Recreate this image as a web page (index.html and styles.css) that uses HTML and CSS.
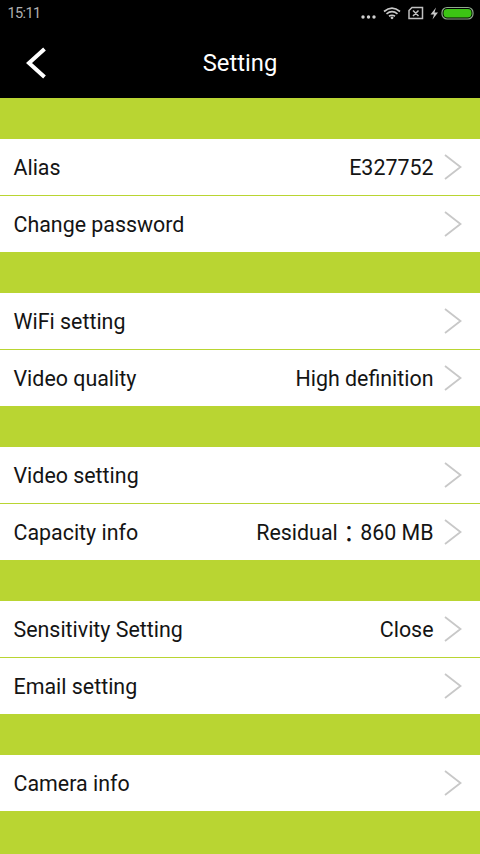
FILE: index.html
```html
<!DOCTYPE html>
<html lang="en">
<head>
<meta charset="utf-8">
<title>Setting</title>
<link rel="stylesheet" href="styles.css">
</head>
<body>
<svg class="defs" width="0" height="0"><symbol id="chevron" viewBox="0 0 18 26"><path d="M1 1 16.500 13 1 25" fill="none" stroke="#c8c8c8" stroke-width="1.8"/></symbol></svg>
<header>
  <div class="status">
    <span class="time">15:11</span>
    <svg class="status-icons" width="116" height="28" viewBox="360 0 116 28">
      <g fill="#d0d0d0"><circle cx="363" cy="17" r="1.700"/><circle cx="368.500" cy="17" r="1.700"/><circle cx="374" cy="17" r="1.700"/></g>
      <g fill="none" stroke="#c8c8c8" stroke-width="1.700"><path d="M384 11.500Q392 4.800 400 11.500"/><path d="M386.500 13.900Q392 9.500 397.500 13.900"/><path d="M389 16.300Q392 14.200 395 16.300"/></g>
      <circle cx="392" cy="17.800" r="1.400" fill="#c8c8c8"/>
      <path d="M412 7.500H422.500V18.500H409V10.500ZM413 10.500 418.500 16M418.500 10.500 413 16" fill="none" stroke="#c0c0c0" stroke-width="1.500"/>
      <path d="M436 7.500 430.500 14.500H434L432.500 19.500 438 12.500H434.500Z" fill="#c8c8c8"/>
      <rect x="442" y="7.500" width="31" height="11.500" rx="5" fill="none" stroke="#8fa88c" stroke-width="1.200"/>
      <rect x="443.500" y="9" width="28" height="8.500" rx="3.700" fill="#3cc414"/>
    </svg>
  </div>
  <div class="titlebar">
    <svg class="back" width="22" height="32" viewBox="0 0 22 32"><path d="M19.500 2 4 16 19.500 30" fill="none" stroke="#fff" stroke-width="4"/></svg>
    <h1>Setting</h1>
  </div>
</header>
<main>
  <section><div class="row"><span>Alias</span><span class="value">E327752</span><svg><use href="#chevron"/></svg></div><div class="row"><span>Change password</span><svg><use href="#chevron"/></svg></div></section>
  <section><div class="row"><span>WiFi setting</span><svg><use href="#chevron"/></svg></div><div class="row"><span>Video quality</span><span class="value">High definition</span><svg><use href="#chevron"/></svg></div></section>
  <section><div class="row"><span>Video setting</span><svg><use href="#chevron"/></svg></div><div class="row"><span>Capacity info</span><span class="value">Residual<span class="colon" lang="zh-TW">：</span>860 MB</span><svg><use href="#chevron"/></svg></div></section>
  <section><div class="row"><span>Sensitivity Setting</span><span class="value">Close</span><svg><use href="#chevron"/></svg></div><div class="row"><span>Email setting</span><svg><use href="#chevron"/></svg></div></section>
  <section><div class="row"><span>Camera info</span><svg><use href="#chevron"/></svg></div></section>
</main>
</body>
</html>
```
FILE: styles.css
```css
* { box-sizing: border-box; }
body { margin: 0; height: 854px; background: #b9d532; font-family: Roboto, "Noto Sans CJK TC", sans-serif; color: #141414; overflow: hidden; }
.defs { display: block; }
header { height: 98px; background: #000; }
.status { height: 28px; display: flex; justify-content: space-between; padding: 0 4px 0 7.5px; }
.time { color: #b0b0b0; font-family: Roboto, sans-serif; font-size: 14.5px; letter-spacing: -0.6px; line-height: 28px; }
.titlebar { height: 70px; display: grid; grid-template-columns: 80px 1fr 80px; align-items: center; }
.back { margin-left: 25px; }
h1 { margin: 0; color: #fff; font-size: 23.8px; line-height: 29px; font-weight: 400; text-align: center; }
main { display: flex; flex-direction: column; gap: 41px; padding-top: 41px; }
.row { height: 56px; display: flex; align-items: center; padding: 0 18px 0 13.5px; background: #fff; font-size: 21.4px; line-height: 26px; white-space: nowrap; }
.row + .row { margin-top: 1px; }
.row svg { width: 18px; height: 26px; margin-left: 10.5px; }
.row > span { padding-top: 2px; }
.row > span:first-child { margin-right: auto; }
.colon { font-family: "Noto Sans CJK TC", sans-serif; font-size: 22.4px; line-height: 0; vertical-align: -2px; }
```
